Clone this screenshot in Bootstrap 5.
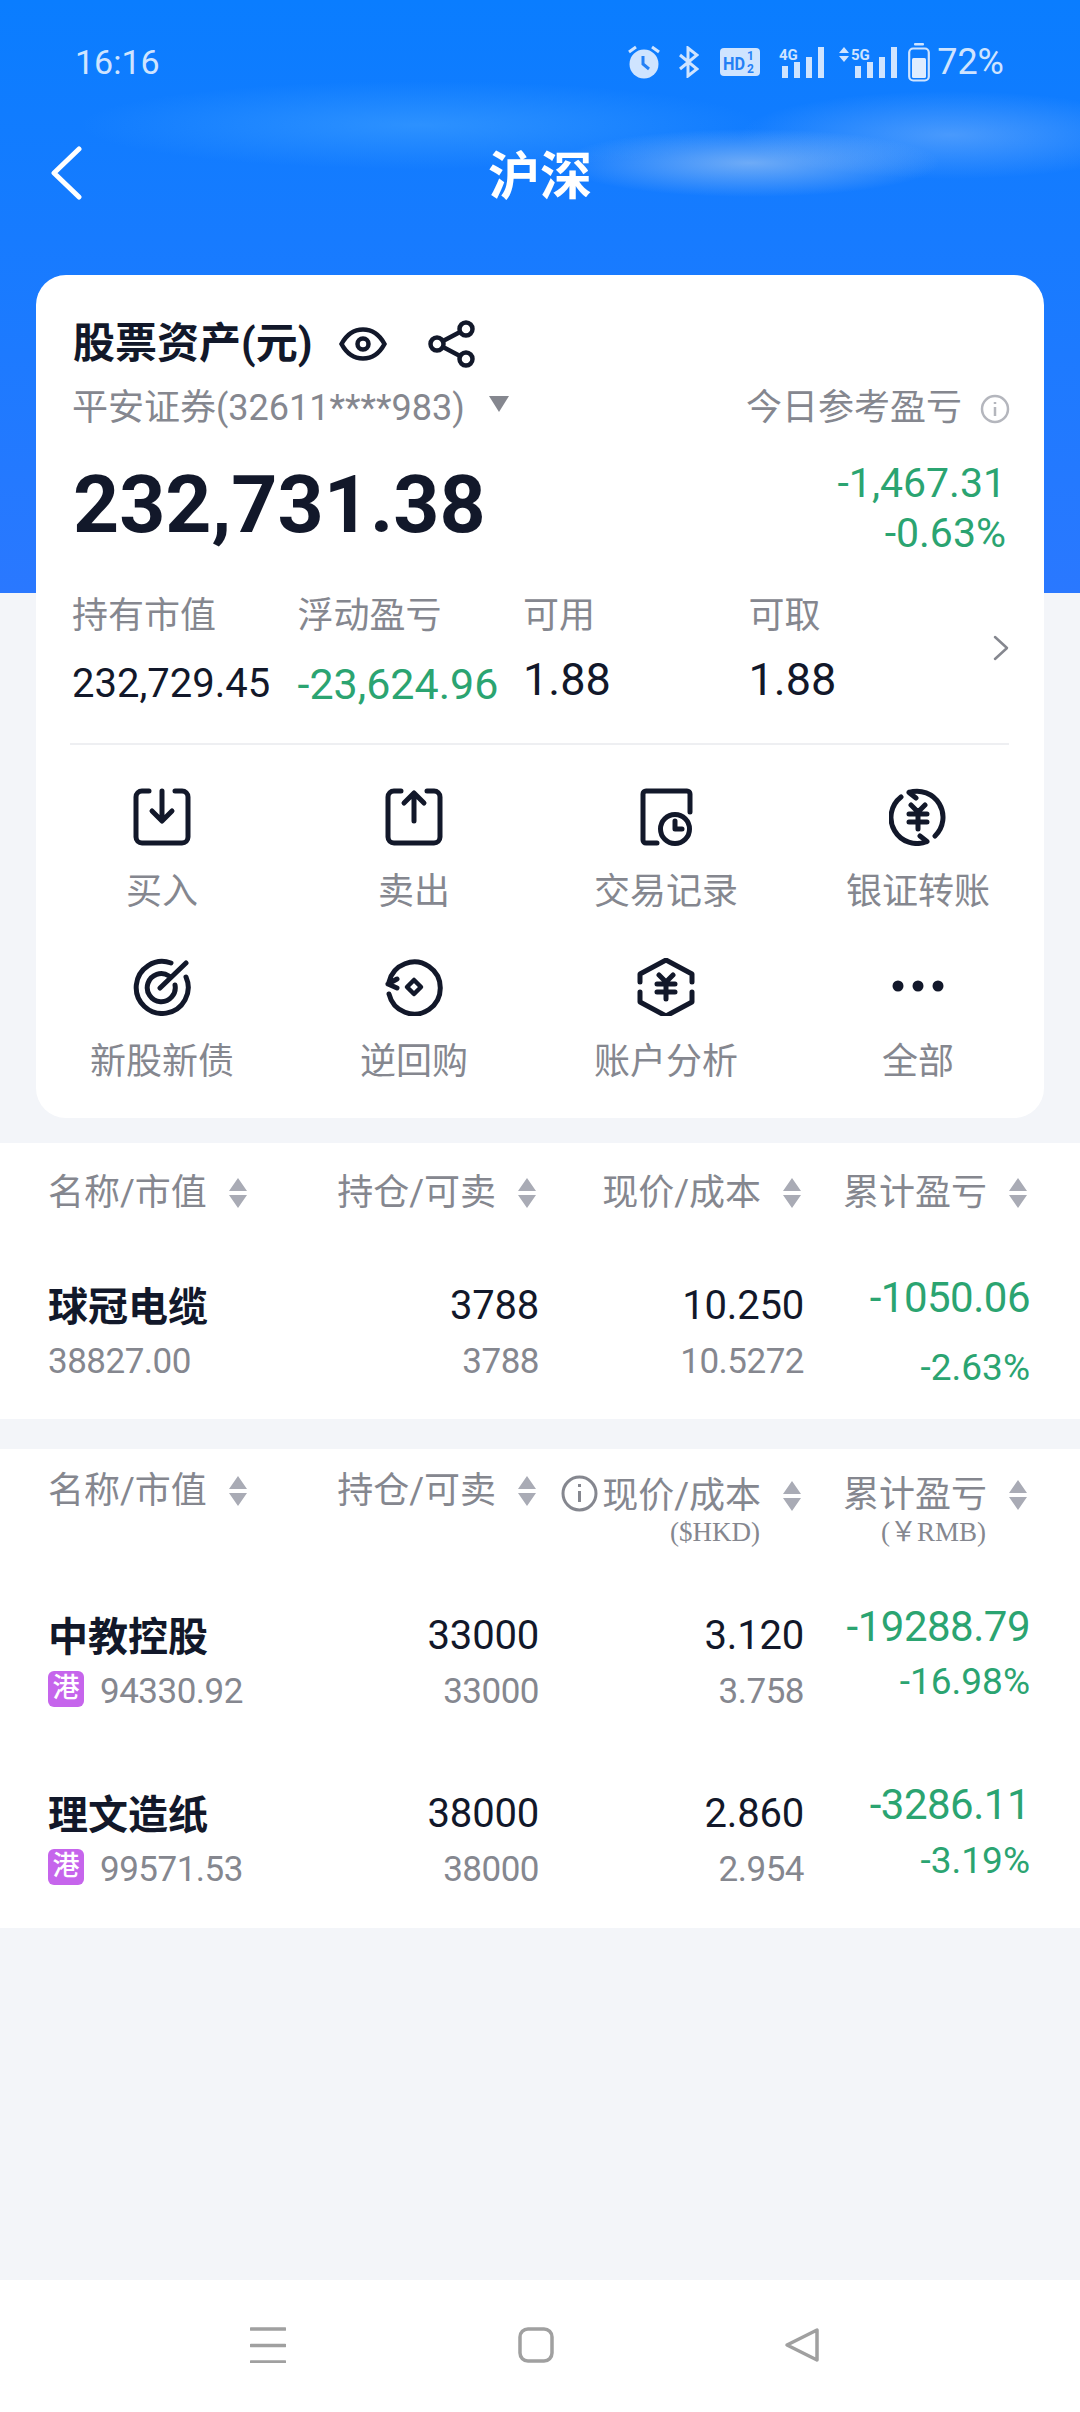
<!DOCTYPE html>
<html lang="zh-CN">
<head>
    <meta charset="UTF-8" />
    <title>沪深</title>
    <link href="https://cdn.jsdelivr.net/npm/bootstrap@5.3.0/dist/css/bootstrap.min.css" rel="stylesheet" />
    <style>
        html, body { margin: 0; background: #f3f5f9; }
        body { font-family: Roboto, "Noto Sans CJK SC", sans-serif; color: #12182a; }
        .screen {
            width: 1080px; height: 2412px; overflow: hidden;
            background-color: #f3f5f9;
            background-image:
                radial-gradient(ellipse 190px 34px at 750px 163px, rgba(185,210,240,.55), transparent),
                radial-gradient(ellipse 210px 44px at 950px 135px, rgba(150,195,250,.42), transparent),
                radial-gradient(ellipse 340px 44px at 420px 125px, rgba(90,180,255,.38), transparent),
                linear-gradient(180deg, #0a7dff 0, #2a78ff 593px);
            background-size: 100% 593px;
            background-repeat: no-repeat;
        }
        .statusline { height: 124px; padding: 0 76px 0 75px; color: #cfe4ff; font-size: 36px; }
        .statusline svg { display: block; fill: #cfe4ff; }
        .sttime { font-size: 34px; }
        .titleline { height: 102px; margin-bottom: 49px; color: #fff; }
        .titleline .backbtn { position: absolute; left: 50px; top: 146px; }
        .titletext { font-size: 52px; font-weight: 700; line-height: 102px; padding-top: 3px; }
        .assetcard { margin: 0 36px; height: 843px; background: #fff; border-radius: 30px; padding: 45px 37px 0; }
        .cardhead { height: 48px; }
        .cardtitle { font-size: 42px; font-weight: 700; line-height: 48px; }
        .greytxt { color: #85878f; }
        .greentxt { color: #2ba471; }
        .subline { height: 48px; margin: 16px 0 0 -1px; font-size: 36px; line-height: 48px; }
        .tri { width: 0; height: 0; border-left: 10px solid transparent; border-right: 10px solid transparent; border-top: 16px solid #85878f; }
        .bigline { height: 100px; margin-top: 26px; }
        .bignum { font-size: 80.5px; font-weight: 700; line-height: 100px; margin-top: -6px; }
        .daychg { font-size: 41px; line-height: 50px; text-align: right; margin-right: 1px; }
        .statsline { margin: 35px 0 0 -1px; height: 114px; position: relative; }
        .statcell { width: 225.5px; }
        .statlab { font-size: 36px; line-height: 46px; }
        .statval { font-size: 40px; line-height: 90px; white-space: nowrap; }
        .statval.grn { font-size: 43px; color: #2ba471; }
        .statval.lg { font-size: 45px; line-height: 82px; }
        .chev { position: absolute; right: -3px; top: 41px; }
        .cardrule { border-top: 2px solid #eeeff2; margin: 36px -2px 0 -3px; }
        .quickgrid { display: grid; grid-template-columns: repeat(4, 252px); margin: 43px -37px 0; }
        .quickitem { height: 170px; text-align: center; }
        .quickitem svg { display: block; margin: 0 auto; fill: none; stroke: #12182a; stroke-width: 5; stroke-linecap: round; stroke-linejoin: round; }
        .quicklab { font-size: 36px; line-height: 48px; margin-top: 22px; color: #85878f; }
        .holdbox { background: #fff; padding: 0 50px 0 48px; }
        .holdgrid { display: grid; grid-template-columns: 220px 271px 265px 226px; }
        .holdgrid > div:not(:first-child) { text-align: right; }
        .hdcell { font-size: 36px; line-height: 40px; color: #85878f; white-space: nowrap; }
        .hdcell svg { margin: 0 3px 0 22px; vertical-align: -3px; }
        .hdsub { font-family: "Liberation Serif", serif; font-size: 27px; line-height: 30px; padding-right: 44px; }
        .namecell { font-size: 40px; font-weight: 700; line-height: 48px; }
        .mainnum { font-size: 40px; line-height: 48px; margin-top: -2px; letter-spacing: -.2px; }
        .pnlnum { font-size: 42px; line-height: 48px; color: #2ba471; letter-spacing: -.5px; }
        .subnum { font-size: 35px; line-height: 44px; height: 44px; color: #85878f; letter-spacing: -.5px; }
        .subpct { font-size: 37px; line-height: 44px; color: #2ba471; }
        .hkmark { display: inline-block; width: 36px; height: 36px; line-height: 35px; font-size: 27px; font-weight: 500; text-align: center; border-radius: 6px; color: #fff; background: #c665ec; margin-right: 16px; vertical-align: 6px; letter-spacing: 0; }
        .navfoot { height: 132px; background: #fff; margin-top: auto; padding-top: 47px; }
        .navfoot svg { display: block; fill: none; stroke: #a0a0a0; stroke-width: 3.5; stroke-linejoin: round; stroke-linecap: round; }
    </style>
</head>
<body>
<div class="screen d-flex flex-column position-relative">

    <!-- barra de estado -->
    <div class="statusline d-flex align-items-center justify-content-between">
        <div class="sttime">16:16</div>
        <div class="d-flex align-items-center">
            <svg width="32" height="34" viewBox="0 0 32 34">
                <circle cx="16" cy="19" r="14.5"/>
                <path d="M1 7 L8 2 M31 7 L24 2" stroke="#cfe4ff" stroke-width="3" fill="none"/>
                <path d="M15 11 V19 L21 24" stroke="#2480f5" stroke-width="3" fill="none"/>
            </svg>
            <svg width="21" height="32" viewBox="0 0 21 32" style="margin-left:18px">
                <path d="M2 9 L19 23 L10 30 V2 L19 9 L2 23" fill="none" stroke="#cfe4ff" stroke-width="3"/>
            </svg>
            <svg width="40" height="28" viewBox="0 0 40 28" style="margin-left:21px">
                <rect width="40" height="28" rx="4"/>
                <text x="3" y="22" font-family="Roboto" font-weight="700" font-size="19" textLength="22" lengthAdjust="spacingAndGlyphs" fill="#2480f5">HD</text>
                <text x="27" y="12" font-family="Roboto" font-weight="700" font-size="12" fill="#2480f5">1</text>
                <text x="27" y="25" font-family="Roboto" font-weight="700" font-size="12" fill="#2480f5">2</text>
            </svg>
            <svg width="46" height="32" viewBox="0 0 46 32" style="margin-left:19px">
                <text x="0" y="14" font-family="Roboto" font-weight="700" font-size="15" fill="#cfe4ff">4G</text>
                <rect x="3" y="20" width="6" height="12"/><rect x="15" y="16" width="6" height="16"/><rect x="27" y="11" width="6" height="21"/><rect x="39" y="1" width="6" height="31"/>
            </svg>
            <svg width="59" height="32" viewBox="0 0 59 32" style="margin-left:13px">
                <path d="M1 7 L6 1 L11 7 Z M1 10 L6 16 L11 10 Z"/>
                <text x="13" y="14" font-family="Roboto" font-weight="700" font-size="15" fill="#cfe4ff">5G</text>
                <rect x="17" y="20" width="6" height="12"/><rect x="29" y="16" width="6" height="16"/><rect x="41" y="11" width="6" height="21"/><rect x="53" y="1" width="6" height="31"/>
            </svg>
            <svg width="22" height="39" viewBox="0 0 22 39" style="margin-left:11px">
                <rect x="6" y="0" width="10" height="2.5" rx="1"/>
                <rect x="1.2" y="5.5" width="19.6" height="32" rx="4" fill="none" stroke="#cfe4ff" stroke-width="2.2"/>
                <rect x="4" y="15" width="14" height="20" rx="1.5" fill="#e0edff"/>
            </svg>
            <div style="margin-left:7px" class="lh-1">72%</div>
        </div>
    </div>

    <div class="titleline text-center">
        <svg class="backbtn" width="32" height="54" viewBox="0 0 32 54" fill="none" stroke="#fff" stroke-width="5" stroke-linecap="round" stroke-linejoin="round"><path d="M29 3 L4 27 L29 51"/></svg>
        <div class="titletext">沪深</div>
    </div>

    <!-- tarjeta de activos -->
    <div class="assetcard">
        <div class="cardhead d-flex align-items-center">
            <div class="cardtitle">股票资产(元)</div>
            <svg style="margin-left:27px" width="48" height="34" viewBox="0 0 48 34" fill="none" stroke="#12182a" stroke-width="4.500">
                <path d="M2.5 17 C9 5 17 2.5 24 2.5 S39 5 45.5 17 C39 29 31 31.500 24 31.500 S9 29 2.500 17 Z"/>
                <circle cx="24" cy="17" r="5.500"/>
            </svg>
            <svg style="margin-left:41px" width="47" height="48" viewBox="0 0 47 48" fill="none" stroke="#12182a" stroke-width="4.500">
                <circle cx="38" cy="9" r="6.500"/><circle cx="9" cy="24" r="6.500"/><circle cx="38" cy="39" r="6.500"/>
                <path d="M15 21 L32 12 M15 27 L32 36"/>
            </svg>
        </div>
        <div class="subline greytxt d-flex align-items-center">
            <span>平安证券(32611****983)</span>
            <span class="tri ms-4 mb-2"></span>
            <span class="ms-auto">今日参考盈亏</span>
            <svg class="position-relative" style="margin-left:15px;top:1px;right:-3px" width="30" height="30" viewBox="0 0 30 30" fill="none" stroke="#b4b6bd" stroke-width="2.500"><circle cx="15" cy="15" r="13"/><path d="M15 13 V22 M15 8 V10"/></svg>
        </div>
        <div class="bigline d-flex justify-content-between align-items-center">
            <div class="bignum">232,731.38</div>
            <div class="daychg greentxt">-1,467.31<br>-0.63%</div>
        </div>
        <div class="statsline d-flex">
            <div class="statcell"><div class="statlab greytxt">持有市值</div><div class="statval">232,729.45</div></div>
            <div class="statcell"><div class="statlab greytxt">浮动盈亏</div><div class="statval grn">-23,624.96</div></div>
            <div class="statcell"><div class="statlab greytxt">可用</div><div class="statval lg">1.88</div></div>
            <div class="statcell"><div class="statlab greytxt">可取</div><div class="statval lg">1.88</div></div>
            <svg class="chev" width="18" height="28" viewBox="0 0 18 28" fill="none" stroke="#85878f" stroke-width="2.500" stroke-linecap="round" stroke-linejoin="round"><path d="M3 3 L15 14 L3 25"/></svg>
        </div>
        <div class="cardrule"></div>
        <div class="quickgrid">
            <div class="quickitem">
                <svg width="58" height="58" viewBox="0 0 58 58"><path d="M16 3 H9 a6 6 0 0 0 -6 6 V49 a6 6 0 0 0 6 6 H49 a6 6 0 0 0 6 -6 V9 a6 6 0 0 0 -6 -6 H42 M29 3 V32 M19 23 L29 33 L39 23"/></svg>
                <div class="quicklab">买入</div>
            </div>
            <div class="quickitem">
                <svg width="58" height="58" viewBox="0 0 58 58"><path d="M16 3 H9 a6 6 0 0 0 -6 6 V49 a6 6 0 0 0 6 6 H49 a6 6 0 0 0 6 -6 V9 a6 6 0 0 0 -6 -6 H42 M29 6 V33 M19 15 L29 5 L39 15"/></svg>
                <div class="quicklab">卖出</div>
            </div>
            <div class="quickitem">
                <svg width="58" height="58" viewBox="0 0 58 58"><path d="M20 55 H9 a3 3 0 0 1 -3 -3 V6 a3 3 0 0 1 3 -3 H50 a3 3 0 0 1 3 3 V24"/><circle cx="38" cy="41" r="14.500"/><path d="M38 33 V41 H45"/></svg>
                <div class="quicklab">交易记录</div>
            </div>
            <div class="quickitem">
                <svg width="58" height="58" viewBox="0 0 58 58"><path d="M20 4.500 A26 26 0 0 1 46 48 M20 4.500 L27 10 M38 53.500 A26 26 0 0 1 12 9 M38 53.500 L31 48 M22 17 L29 24 L36 17 M20 26 H38 M20 34 H38 M29 24 V41"/></svg>
                <div class="quicklab">银证转账</div>
            </div>
            <div class="quickitem">
                <svg width="58" height="58" viewBox="0 0 58 58"><path d="M38 5 A26 26 0 1 0 53 19 M36 18 A14 14 0 1 0 42 27 M27 30 L53 5"/></svg>
                <div class="quicklab">新股新债</div>
            </div>
            <div class="quickitem">
                <svg width="58" height="58" viewBox="0 0 58 58"><path d="M4 36 A26 26 0 1 0 4 24 M3 26 L12 21 M3 26 L12 30"/><path d="M29 22 L36 29 L29 36 L22 29 Z" stroke-width="4.500"/></svg>
                <div class="quicklab">逆回购</div>
            </div>
            <div class="quickitem">
                <svg width="58" height="58" viewBox="0 0 58 58"><path d="M3 24 V16 L29 2 L55 16 V24 M3 34 V44 L29 58 L55 44 V34 M22 17 L29 24 L36 17 M20 26 H38 M20 34 H38 M29 24 V41"/></svg>
                <div class="quicklab">账户分析</div>
            </div>
            <div class="quickitem">
                <svg width="58" height="58" viewBox="0 0 58 58"><circle cx="9" cy="28" r="5.500" fill="#12182a" stroke="none"/><circle cx="29" cy="28" r="5.500" fill="#12182a" stroke="none"/><circle cx="49" cy="28" r="5.500" fill="#12182a" stroke="none"/></svg>
                <div class="quicklab">全部</div>
            </div>
        </div>
    </div>

    <!-- tabla A股 -->
    <div class="holdbox" style="margin-top:25px;height:276px;padding-top:30px">
        <div class="holdgrid hdcell">
            <div>名称/市值<svg width="18" height="30" viewBox="0 0 18 30" fill="#a9abb5"><path d="M9 0 L18 13 H0 Z M9 30 L18 17 H0 Z"/></svg></div>
            <div>持仓/可卖<svg width="18" height="30" viewBox="0 0 18 30" fill="#a9abb5"><path d="M9 0 L18 13 H0 Z M9 30 L18 17 H0 Z"/></svg></div>
            <div>现价/成本<svg width="18" height="30" viewBox="0 0 18 30" fill="#a9abb5"><path d="M9 0 L18 13 H0 Z M9 30 L18 17 H0 Z"/></svg></div>
            <div>累计盈亏<svg width="18" height="30" viewBox="0 0 18 30" fill="#a9abb5"><path d="M9 0 L18 13 H0 Z M9 30 L18 17 H0 Z"/></svg></div>
        </div>
        <div class="holdgrid" style="margin-top:71px">
            <div class="namecell">球冠电缆</div>
            <div class="mainnum">3788</div>
            <div class="mainnum">10.250</div>
            <div class="pnlnum" style="margin-top:-10px">-1050.06</div>
        </div>
        <div class="holdgrid" style="margin-top:8px">
            <div class="subnum">38827.00</div>
            <div class="subnum">3788</div>
            <div class="subnum">10.5272</div>
            <div class="subpct" style="margin-top:6px">-2.63%</div>
        </div>
    </div>

    <!-- tabla HK -->
    <div class="holdbox" style="margin-top:30px;height:479px;padding-top:22px">
        <div class="holdgrid hdcell">
            <div>名称/市值<svg width="18" height="30" viewBox="0 0 18 30" fill="#a9abb5"><path d="M9 0 L18 13 H0 Z M9 30 L18 17 H0 Z"/></svg></div>
            <div>持仓/可卖<svg width="18" height="30" viewBox="0 0 18 30" fill="#a9abb5"><path d="M9 0 L18 13 H0 Z M9 30 L18 17 H0 Z"/></svg></div>
            <div class="position-relative" style="top:4px">
                <svg class="me-1" style="margin-left:0;vertical-align:-4px" width="37" height="37" viewBox="0 0 37 37" fill="none" stroke="#85878f" stroke-width="3"><circle cx="18.500" cy="18.500" r="16.500"/><path d="M18.500 16 V27 M18.500 9 V12"/></svg>现价/成本<svg width="18" height="30" viewBox="0 0 18 30" fill="#a9abb5"><path d="M9 0 L18 13 H0 Z M9 30 L18 17 H0 Z"/></svg>
            </div>
            <div class="position-relative" style="top:4px">累计盈亏<svg width="18" height="30" viewBox="0 0 18 30" fill="#a9abb5"><path d="M9 0 L18 13 H0 Z M9 30 L18 17 H0 Z"/></svg></div>
        </div>
        <div class="holdgrid greytxt" style="margin-top:5px">
            <div></div>
            <div></div>
            <div class="hdsub">($HKD)</div>
            <div class="hdsub">(￥RMB)</div>
        </div>
        <div class="holdgrid" style="margin-top:66.5px">
            <div class="namecell">中教控股</div>
            <div class="mainnum">33000</div>
            <div class="mainnum">3.120</div>
            <div class="pnlnum" style="margin-top:-11px">-19288.79</div>
        </div>
        <div class="holdgrid" style="margin-top:8px">
            <div class="subnum"><span class="hkmark">港</span>94330.92</div>
            <div class="subnum">33000</div>
            <div class="subnum">3.758</div>
            <div class="subpct" style="margin-top:-9.5px">-16.98%</div>
        </div>
        <div class="holdgrid" style="margin-top:78.5px">
            <div class="namecell">理文造纸</div>
            <div class="mainnum">38000</div>
            <div class="mainnum">2.860</div>
            <div class="pnlnum" style="margin-top:-11px">-3286.11</div>
        </div>
        <div class="holdgrid" style="margin-top:8px">
            <div class="subnum"><span class="hkmark">港</span>99571.53</div>
            <div class="subnum">38000</div>
            <div class="subnum">2.954</div>
            <div class="subpct" style="margin-top:-9.5px">-3.19%</div>
        </div>
    </div>

    <!-- navegación del sistema -->
    <div class="navfoot position-relative">
        <div class="d-flex">
            <svg style="margin-left:250px" width="36" height="36" viewBox="0 0 36 36"><path d="M1 2 H35 M1 18.500 H35 M1 35 H35"/></svg>
            <svg style="margin-left:232px" width="36" height="36" viewBox="0 0 36 36"><rect x="2" y="2" width="32" height="32" rx="8"/></svg>
            <svg style="margin-left:230px" width="36" height="36" viewBox="0 0 36 36"><path d="M33 3 V33 L3 18 Z"/></svg>
        </div>
    </div>
</div>
<script src="https://cdn.jsdelivr.net/npm/bootstrap@5.3.0/dist/js/bootstrap.bundle.min.js"></script>
</body>
</html>
